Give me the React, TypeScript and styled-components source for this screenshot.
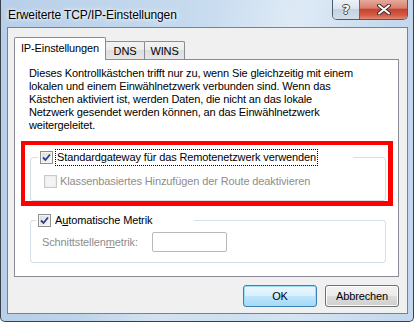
import { createGlobalStyle, styled } from 'styled-components'

const GlobalStyle = createGlobalStyle`
  html, body {
    margin: 0;
    padding: 0;
    background: #ffffff;
  }
  body {
    font-family: "Liberation Sans", Arial, sans-serif;
  }
`

const paragraphLines = [
  'Dieses Kontrollkästchen trifft nur zu, wenn Sie gleichzeitig mit einem',
  'lokalen und einem Einwählnetzwerk verbunden sind. Wenn das',
  'Kästchen aktiviert ist, werden Daten, die nicht an das lokale',
  'Netzwerk gesendet werden können, an das Einwählnetzwerk',
  'weitergeleitet.',
]

const CheckBox = ({ checked, disabled }: { checked?: boolean; disabled?: boolean }) => (
  <StyledCheckBox $disabled={disabled}>
    {checked && (
      <svg width="9" height="9" viewBox="0 0 9 9">
        <path d="M1 4.5 L3.5 7 L8 1.5" fill="none" stroke="#2a3d8f" strokeWidth="1.8" />
      </svg>
    )}
  </StyledCheckBox>
)

const App = () => {
  return (
    <>
      <GlobalStyle />
      <Window>
        <TitleBar>
          <Title>Erweiterte TCP/IP-Einstellungen</Title>
          <CaptionButtons>
            <HelpButton>?</HelpButton>
            <CloseButton>
              <svg width="14" height="11" viewBox="0 0 14 11">
                <path d="M2 1.5 L12 9.5 M12 1.5 L2 9.5" stroke="#4a2a25" strokeWidth="4" strokeLinecap="round" />
                <path d="M2 1.5 L12 9.5 M12 1.5 L2 9.5" stroke="#ffffff" strokeWidth="2" strokeLinecap="round" />
              </svg>
            </CloseButton>
          </CaptionButtons>
        </TitleBar>

        <Client>
          <TabStrip>
            <Tab $active>IP-Einstellungen</Tab>
            <Tab $width={40}>DNS</Tab>
            <Tab $width={41}>WINS</Tab>
          </TabStrip>

          <Panel>
            <Paragraph>
              {paragraphLines.map((line) => (
                <span key={line}>
                  {line}
                  <br />
                </span>
              ))}
            </Paragraph>

            <Highlight>
              <GroupBox>
                <Legend $width={315}>
                  <CheckBox checked />
                  <FocusLabel>Standardgateway für das Remotenetzwerk verwenden</FocusLabel>
                </Legend>
                <OptionRow>
                  <CheckBox disabled />
                  <OptionLabel $disabled>Klassenbasiertes Hinzufügen der Route deaktivieren</OptionLabel>
                </OptionRow>
              </GroupBox>
            </Highlight>

            <MetricGroup>
              <Legend $width={158}>
                <CheckBox checked />
                <OptionLabel>
                  A<u>u</u>tomatische Metrik
                </OptionLabel>
              </Legend>
              <FieldRow>
                <FieldLabel>
                  Schnittstellen<u>m</u>etrik:
                </FieldLabel>
                <TextInput disabled />
              </FieldRow>
            </MetricGroup>
          </Panel>

          <ButtonRow>
            <DialogButton $default>OK</DialogButton>
            <DialogButton>Abbrechen</DialogButton>
          </ButtonRow>
        </Client>
      </Window>
    </>
  )
}

export default App

const Window = styled.div`
  width: 414px;
  height: 322px;
  box-sizing: border-box;
  display: flex;
  flex-direction: column;
  padding: 0 5px 7px 6px;
  border: 1px solid #39404a;
  border-top: none;
  border-radius: 0 0 5px 5px;
  background:
    linear-gradient(115deg, rgba(255, 255, 255, 0) 40%, rgba(255, 255, 255, 0.25) 55%, rgba(255, 255, 255, 0) 70%),
    linear-gradient(to right, #b7cfe8 0%, #c6daee 45%, #d4e4f3 70%, #c2d7ed 100%);
`

const TitleBar = styled.div`
  height: 27px;
  display: flex;
  align-items: flex-start;
`

const Title = styled.div`
  padding: 8px 0 0 1px;
  font-size: 12px;
  line-height: 15px;
  letter-spacing: -0.1px;
  color: #000;
  text-shadow: 0 0 6px #ffffff, 0 0 3px #ffffff;
`

const CaptionButtons = styled.div`
  margin-left: auto;
  display: flex;
  height: 19px;
  border: 1px solid #4b5b6f;
  border-top: none;
  border-radius: 0 0 5px 5px;
  overflow: hidden;
`

const HelpButton = styled.div`
  width: 26px;
  display: flex;
  align-items: center;
  justify-content: center;
  border-right: 1px solid #5a6a7e;
  background: linear-gradient(#eef2f7 0%, #dbe4ee 45%, #c4d1df 50%, #d3dee9 100%);
  font-family: "DejaVu Sans", sans-serif;
  font-size: 13px;
  font-weight: bold;
  color: #fff;
  text-shadow: 1px 0 0 #3b4754, -1px 0 0 #3b4754, 0 1px 0 #3b4754, 0 -1px 0 #3b4754;
`

const CloseButton = styled.div`
  width: 47px;
  display: flex;
  align-items: center;
  justify-content: center;
  background: linear-gradient(#e6a99c 0%, #d98070 42%, #c74330 50%, #d45a45 80%, #e28a72 100%);
`

const Client = styled.div`
  flex: 1;
  display: flex;
  flex-direction: column;
  padding: 9px 8px 6px 6px;
  border: 1px solid #76828f;
  background: #f0f0f0;
  font-size: 11px;
  letter-spacing: -0.12px;
`

const TabStrip = styled.div`
  position: relative;
  z-index: 1;
  height: 23px;
  margin-bottom: -1px;
  display: flex;
  align-items: flex-end;
`

const Tab = styled.div<{ $active?: boolean; $width?: number }>`
  box-sizing: border-box;
  width: ${(p) => (p.$active ? 92 : p.$width)}px;
  height: ${(p) => (p.$active ? 23 : 18)}px;
  margin-bottom: ${(p) => (p.$active ? 0 : 1)}px;
  margin-left: ${(p) => (p.$active ? 0 : -1)}px;
  display: flex;
  align-items: center;
  justify-content: center;
  padding-bottom: ${(p) => (p.$active ? 2 : 0)}px;
  border: 1px solid #898c95;
  border-bottom: none;
  border-radius: 2px 2px 0 0;
  background: ${(p) => (p.$active ? '#ffffff' : 'linear-gradient(#f3f3f3, #ebebeb 50%, #dedede 50%, #e6e6e6)')};
  color: #000;
  white-space: nowrap;
`

const Panel = styled.div`
  flex: 1;
  display: flex;
  flex-direction: column;
  padding-top: 7px;
  border: 1px solid #898c95;
  background: #ffffff;
`

const Paragraph = styled.p`
  margin: 0;
  padding-left: 14px;
  line-height: 13px;
  white-space: nowrap;
  color: #000;
`

const Highlight = styled.div`
  margin: 9px 5px 0 6px;
  padding: 4px 2px 0 5px;
  border-style: solid;
  border-color: #ff0000;
  border-width: 4px 5px 5px 4px;
`

const GroupBox = styled.fieldset`
  margin: 0;
  min-width: 0;
  padding: 0 0 11px 13px;
  border: 1px solid #d5dfe5;
  border-radius: 3px;
`

const MetricGroup = styled(GroupBox)`
  margin: 6px 12px 0 15px;
  padding: 3px 0 10px 11px;
`

const Legend = styled.legend<{ $width: number }>`
  box-sizing: border-box;
  width: ${(p) => p.$width}px;
  margin-left: -6px;
  padding: 0 0 0 2px;
  height: 17px;
  display: flex;
  align-items: center;
  gap: 2px;
`

const StyledCheckBox = styled.span<{ $disabled?: boolean }>`
  box-sizing: border-box;
  flex: none;
  width: 13px;
  height: 13px;
  display: flex;
  align-items: center;
  justify-content: center;
  border: 1px solid ${(p) => (p.$disabled ? '#c9c9c9' : '#8e8f8f')};
  background: ${(p) => (p.$disabled ? '#f4f4f4' : 'linear-gradient(135deg, #dcdcdc, #f7f7f7)')};
  box-shadow: inset 0 0 0 1px ${(p) => (p.$disabled ? '#ececec' : '#f4f4f4')};
`

const FocusLabel = styled.span`
  padding: 0 1px;
  line-height: 15px;
  border: 1px dotted #000;
  color: #000;
  white-space: nowrap;
`

const OptionLabel = styled.span<{ $disabled?: boolean }>`
  padding-left: ${(p) => (p.$disabled ? 3 : 2)}px;
  line-height: 15px;
  color: ${(p) => (p.$disabled ? '#8d8d8d' : '#000')};
  white-space: nowrap;
`

const OptionRow = styled.div`
  margin-top: 8px;
  display: flex;
  align-items: center;
`

const FieldRow = styled.div`
  display: flex;
  align-items: center;
`

const FieldLabel = styled.span`
  width: 110px;
  color: #8d8d8d;
  white-space: nowrap;
`

const TextInput = styled.input`
  box-sizing: border-box;
  width: 75px;
  height: 20px;
  margin: 0;
  border: 1px solid #b5babe;
  border-radius: 2px;
  background: #ffffff;
`

const ButtonRow = styled.div`
  margin-top: 8px;
  display: flex;
  justify-content: flex-end;
  gap: 8px;
`

const DialogButton = styled.button<{ $default?: boolean }>`
  box-sizing: border-box;
  width: 74px;
  height: 22px;
  margin: 0;
  padding: 0;
  font-family: "Liberation Sans", Arial, sans-serif;
  font-size: 11px;
  letter-spacing: -0.12px;
  color: #000;
  border-radius: 3px;
  border: 1px solid ${(p) => (p.$default ? '#3c7fb1' : '#707070')};
  background: ${(p) =>
    p.$default
      ? 'linear-gradient(#eaf6fd 0%, #d9f0fc 50%, #bee6fd 50%, #a7d9f5 100%)'
      : 'linear-gradient(#f2f2f2 0%, #ebebeb 50%, #dddddd 50%, #cfcfcf 100%)'};
  box-shadow: inset 0 0 0 1px ${(p) => (p.$default ? '#9fdcf7' : '#fcfcfc')};
`
